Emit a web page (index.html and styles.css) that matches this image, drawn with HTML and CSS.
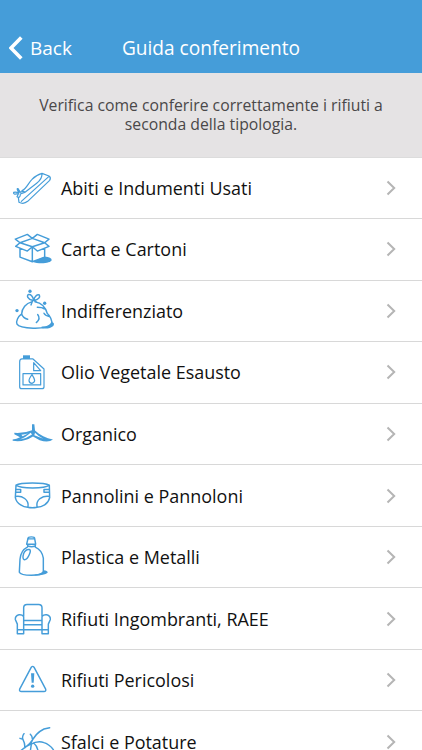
FILE: index.html
```html
<!DOCTYPE html>
<html lang="it">
<head>
<meta charset="utf-8">
<meta name="viewport" content="width=device-width">
<title>Guida conferimento</title>
<link rel="stylesheet" href="styles.css">
</head>
<body>
<div class="screen">
<header class="nav">
  <a class="back"><svg class="back-arrow" viewBox="0 0 14 24"><path d="M12.3 1.5 2 12 12.3 22.5"/></svg><span>Back</span></a>
  <h1 class="title">Guida conferimento</h1>
</header>
<p class="intro">Verifica come conferire correttamente i rifiuti a<br>seconda della tipologia.</p>
<ul class="list">
  <li class="row">
    <svg class="icon thin" viewBox="0 -9 183 184.65"><path d="M66 92C80 86 84 70 96 58Q108 45 126 40L147 48Q154 53 149 61L83 124Q71 134 57 127L55 112M126 40Q127 57 110 70L76 96M147 49 64 124"/><path d="M57 98Q48 84 54 86L61 97Q72 91 74 97L61 102Q61 116 51 110L56 100Q39 106 41 97Q46 95 57 98Z"/></svg>
    <span class="label">Abiti e Indumenti Usati</span><svg class="chevron" viewBox="0 0 10 16"><path d="M1.5 1.5 8.2 8 1.5 14.5"/></svg></li>
  <li class="row">
    <svg class="icon" viewBox="0 -4.2 183 184.65"><path class="fill" d="M98 124 134 108Q155 110 155 119C154 129 116 132 98 124Z"/><path d="M60 67 97 54 134 67 97 79ZM60 67 46 56 82 42 97 54 112 42 147 56 134 67 147 78 112 92 97 79 82 92 47 78ZM60 84V110L97 124 134 110V84M97 79V124"/></svg>
    <span class="label">Carta e Cartoni</span><svg class="chevron" viewBox="0 0 10 16"><path d="M1.5 1.5 8.2 8 1.5 14.5"/></svg></li>
  <li class="row">
    <svg class="icon" viewBox="0 -5.7 183 184.65"><path class="fill" d="M125 134Q148 134 154 120 166 122 160 132 149 142 125 139Z"/><path d="M95 60C78 64 66 79 65 96C54 104 47 119 51 127C59 141 138 144 155 128C158 115 149 101 142 95C138 80 130 64 105 60M99 56C82 52 79 40 86 38Q96 37 101 54Q107 37 118 39Q123 50 101 56M98 56 93 69M103 56 112 62M65 96Q69 108 83 112M113 98Q123 111 109 122M112 76Q127 76 133 81M132 94Q135 101 148 104"/><circle class="fill" cx="90" cy="28" r="5"/><circle class="fill" cx="51" cy="86" r="5"/><circle class="fill" cx="134" cy="64" r="5"/></svg>
    <span class="label">Indifferenziato</span><svg class="chevron" viewBox="0 0 10 16"><path d="M1.5 1.5 8.2 8 1.5 14.5"/></svg></li>
  <li class="row">
    <svg class="icon thin" viewBox="0 -3.9 183 184.65"><path class="fill" d="M69 36H90V47H69Z"/><path d="M66 47H99L132 77V130Q132 136 126 136H65Q59 136 59 130V56Q59 47 66 47ZM69 91H122V125H69ZM101 58V82H122ZM96 94Q87 106 87 112 88 120 96 120 104 118 104 111 103 105 96 94Z"/></svg>
    <span class="label">Olio Vegetale Esausto</span><svg class="chevron" viewBox="0 0 10 16"><path d="M1.5 1.5 8.2 8 1.5 14.5"/></svg></li>
  <li class="row">
    <svg class="icon" viewBox="0 -5.4 183 184.65"><path class="fill" d="M96 58H103L105 77C120 91 138 101 159 104Q145 115 119 106L99 95Q69 114 38 108V104Q50 103 60 97L43 88V84Q72 86 96 76Z"/><path class="cut" d="M64 90Q75 88 84 86L68 94ZM60 104Q78 97 92 84L96 89Q80 101 60 104ZM105 84Q114 94 130 102L103 91Z"/></svg>
    <span class="label">Organico</span><svg class="chevron" viewBox="0 0 10 16"><path d="M1.5 1.5 8.2 8 1.5 14.5"/></svg></li>
  <li class="row">
    <svg class="icon" viewBox="0 -3.6 183 184.65"><path d="M48 57C62 48 132 48 148 57C133 68 63 68 48 57ZM48 57 46 94Q49 108 62 116 72 123 83 123 97 126 111 123 123 123 134 116 146 108 149 94L148 57M46 91Q62 88 74 97 87 107 84 122M149 91Q133 88 120 97 108 107 111 122M48 70H62V78H48M148 70H132V78H148"/></svg>
    <span class="label">Pannolini e Pannoloni</span><svg class="chevron" viewBox="0 0 10 16"><path d="M1.5 1.5 8.2 8 1.5 14.5"/></svg></li>
  <li class="row">
    <svg class="icon" viewBox="0 -3.6 183 184.65"><path class="fill" d="M104 142Q128 139 130 129 144 129 143 137 133 145 104 145Z"/><path d="M84 34Q84 29 94 29 104 29 104 34L107 51H80ZM83 52V59Q62 70 60 96L58 135Q62 144 94 144 127 144 130 135V93Q126 69 106 60V52M83 56Q95 61 106 56M88 67Q77 65 71 79 66 95 73 98 82 97 88 82 94 69 88 67ZM84 35H104"/></svg>
    <span class="label">Plastica e Metalli</span><svg class="chevron" viewBox="0 0 10 16"><path d="M1.5 1.5 8.2 8 1.5 14.5"/></svg></li>
  <li class="row">
    <svg class="icon" viewBox="0 -3.3 183 184.65"><path d="M71 94V56Q71 46 81 46H116Q126 46 126 56V94ZM71 94V107H126V94M71 107V122H126V107M71 82Q66 76 57 77 45 80 46 91L52 105V134H71V122M126 82Q131 76 140 77 152 80 151 91L145 105V134H126V122M52 122H71M126 122H145"/></svg>
    <span class="label">Rifiuti Ingombranti, RAEE</span><svg class="chevron" viewBox="0 0 10 16"><path d="M1.5 1.5 8.2 8 1.5 14.5"/></svg></li>
  <li class="row">
    <svg class="icon" viewBox="0 -3.6 183 184.65"><path d="M94 51Q98 46 102 51L137 117Q139 124 132 124H64Q57 124 59 117Z"/><path class="fill" d="M93 69H103L101 98H95Z"/><circle class="fill" cx="98" cy="108" r="5"/></svg>
    <span class="label">Rifiuti Pericolosi</span><svg class="chevron" viewBox="0 0 10 16"><path d="M1.5 1.5 8.2 8 1.5 14.5"/></svg></li>
  <li class="row">
    <svg class="icon" viewBox="0 182 183 184.65"><path d="M59 304Q77 288 92 281 104 249 132 236L149 232M97 265Q97 258 91 252M98 268Q90 282 75 292M72 250Q65 259 69 268 75 278 75 292M69 267 60 264M92 282Q114 270 132 277 148 282 160 298M101 278Q111 286 114 301M94 282 91 302"/></svg>
    <span class="label">Sfalci e Potature</span><svg class="chevron" viewBox="0 0 10 16"><path d="M1.5 1.5 8.2 8 1.5 14.5"/></svg></li>
</ul>
</div>
</body>
</html>
```
FILE: styles.css
```css
* { box-sizing: border-box; }
body { margin: 0; background: #fff; font-family: "Open Sans", "Noto Sans", sans-serif; }
.screen { height: 750px; overflow: hidden; }
.nav {
  height: 73px;
  padding: 23px 9px 0;
  display: grid;
  grid-template-columns: 90px 1fr 90px;
  align-items: center;
  background: #459dd9;
  color: #fff;
}
.back { display: flex; align-items: center; gap: 7px; font-size: 19px; white-space: nowrap; }
.back-arrow { width: 14px; height: 24px; fill: none; stroke: #fff; stroke-width: 3.6; }
.title { margin: 0; font-size: 19.1px; font-weight: 400; text-align: center; white-space: nowrap; }
.intro {
  margin: 0;
  height: 83.5px;
  padding-top: 23px;
  background: #e5e3e4;
  color: #4a4849;
  font-size: 15.75px;
  line-height: 19px;
  text-align: center;
  white-space: nowrap;
}
.list { margin: 0; padding: 0; list-style: none; border-top: 1px solid #dcdcdc; }
.row {
  height: 61.55px;
  display: flex;
  align-items: center;
  padding-right: 26px;
  border-bottom: 1px solid #d8d8d8;
  color: #111;
  font-size: 17.95px;
}
.icon {
  width: 61px;
  height: 61.55px;
  flex: none;
  fill: none;
  stroke: #459dd9;
  stroke-width: 4.4;
  stroke-linecap: round;
  stroke-linejoin: round;
}
.thin { stroke-width: 3.6; }
.fill { fill: #459dd9; stroke: none; }
.cut { fill: #fff; stroke: none; }
.label { white-space: nowrap; }
.chevron { width: 10px; height: 16px; margin-left: auto; fill: none; stroke: #b5b5b5; stroke-width: 2; }
```
